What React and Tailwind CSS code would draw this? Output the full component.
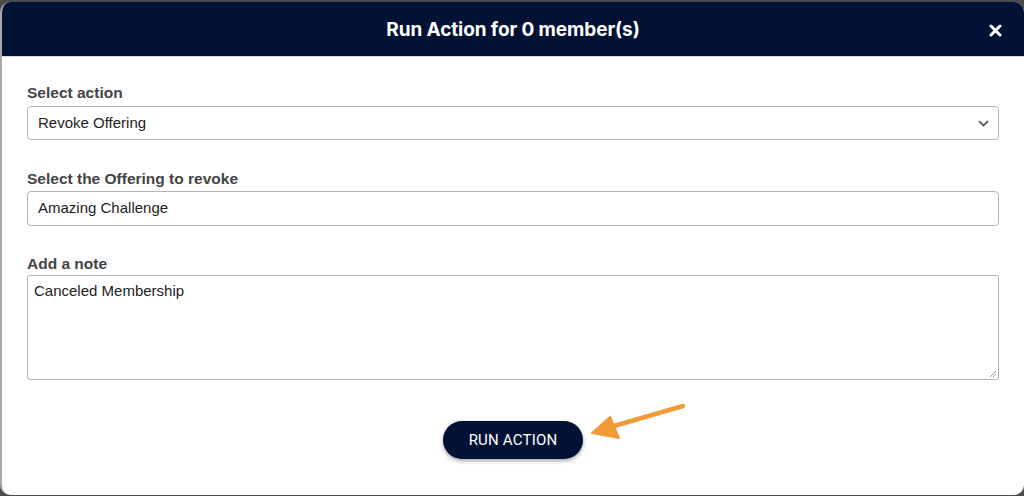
import React from "react";

export default function App() {
    return (
        <div className="w-[1024px] h-[496px] bg-[#4a4a4a] pt-[2px] overflow-hidden" style={{ fontFamily: "'Liberation Sans', Arial, sans-serif" }}>
            <div className="relative h-[493px] bg-white rounded-[10px] overflow-hidden border-l-2 border-[#a8a8a8]">

                {/* HEADER */}
                <div className="h-[55px] pt-[3px] bg-[#021235] flex items-center justify-center relative border-b border-[#d9d9d9]">
                    <h2 className="text-white text-[19px] font-bold tracking-[-0.1px]" style={{ fontFamily: "Inter, 'Liberation Sans', sans-serif" }}>Run Action for 0 member(s)</h2>
                    <button className="absolute right-[22px] top-[22px] text-white">
                        <svg width="13" height="13" viewBox="0 0 13 13">
                            <path d="M2 2 L11 11 M11 2 L2 11" stroke="white" strokeWidth="3" strokeLinecap="round" />
                        </svg>
                    </button>
                </div>

                {/* BODY */}
                <div className="px-[25px] pt-[26px]">
                    <label className="block text-[15.5px] font-bold text-[#444] leading-5">Select action</label>
                    <div className="relative mt-[3px] h-[34px] border border-[#b3b3b3] rounded-[4px] flex items-center pl-[10px] text-[15px] text-[#222]">
                        Revoke Offering
                        <svg className="absolute right-[9px] top-[13px]" width="11" height="7" viewBox="0 0 11 7">
                            <path d="M1 1 L5.5 5.5 L10 1" fill="none" stroke="#444" strokeWidth="1.6" />
                        </svg>
                    </div>

                    <label className="block mt-[29px] text-[15.5px] font-bold text-[#444] leading-5">Select the Offering to revoke</label>
                    <div className="mt-[2px] h-[35px] border border-[#b3b3b3] rounded-[4px] flex items-center pl-[10px] text-[15px] text-[#222]">
                        Amazing Challenge
                    </div>

                    <label className="block mt-[28px] text-[15.5px] font-bold text-[#444] leading-5">Add a note</label>
                    <div className="relative mt-[1px] h-[105px] border border-[#b3b3b3] rounded-[3px] px-[6px] pt-[4px] text-[15px] text-[#222]">
                        Canceled Membership
                        <svg className="absolute right-[1px] bottom-[1px]" width="8" height="8" viewBox="0 0 8 8">
                            <path d="M7 1 L1 7 M7 4 L4 7" stroke="#999" strokeWidth="1" />
                        </svg>
                    </div>

                    <div className="flex justify-center mt-[41px]">
                        <button className="w-[140px] h-[38px] rounded-full bg-[#021235] text-white text-[15px] font-normal shadow-[0_2px_4px_rgba(0,0,0,0.35)] tracking-[0.2px]" style={{ fontFamily: "Roboto, 'Liberation Sans', sans-serif" }}>
                            RUN ACTION
                        </button>
                    </div>
                </div>

                {/* ARROW */}
                <svg className="absolute left-[586px] top-[398px]" width="100" height="46" viewBox="586 400 100 46">
                    <path d="M681 406 L612 426" stroke="#f39a38" strokeWidth="4.5" strokeLinecap="round" />
                    <path d="M590 433 L608 417 L617 438 Z" fill="#f39a38" stroke="#f39a38" strokeWidth="2" strokeLinejoin="round" />
                </svg>
            </div>
        </div>
    );
}
